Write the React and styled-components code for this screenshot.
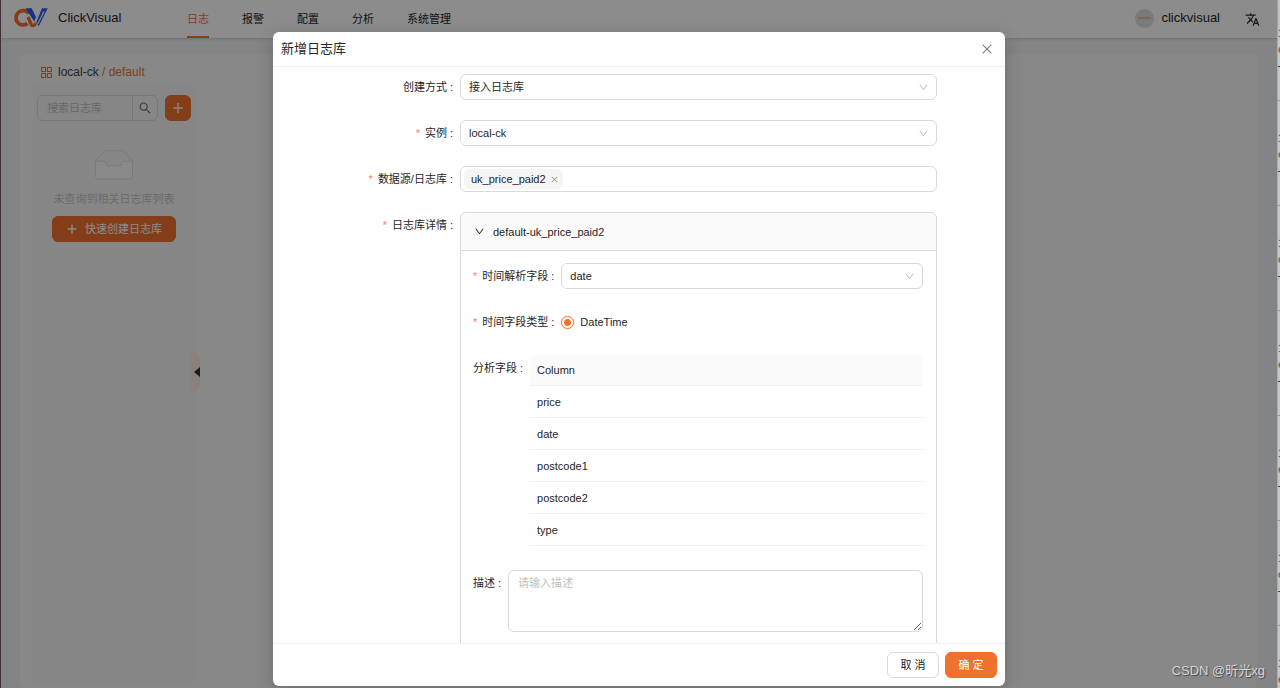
import React from "react";
import styled, { createGlobalStyle, css } from "styled-components";
import {
  AiOutlineAppstore,
  AiOutlineClose,
  AiOutlineDown,
  AiOutlinePlus,
  AiOutlineSearch,
} from "react-icons/ai";
import { MdTranslate } from "react-icons/md";

const sans = `"Liberation Sans", "Noto Sans CJK SC", sans-serif`;
const orange = "#ee722e";
const line = "#d9d9d9";

const GlobalStyle = createGlobalStyle`
  *, *::before, *::after { box-sizing: border-box; }
  body { margin: 0; font: 11px/18px ${sans}; color: #262626; background: #3f3039; }
  button, input, select, textarea { font: inherit; color: inherit; margin: 0; }
  a { color: inherit; text-decoration: none; }
  svg { display: block; flex: none; }
`;

const Desktop = styled.div`
  display: flex;
  height: 100vh;
  padding-left: 1px;
  overflow: hidden;
`;

const AppWindow = styled.div`
  position: relative;
  flex: 1;
  min-width: 0;
  display: flex;
  flex-direction: column;
  background: #eef1f5;
`;

const TopBar = styled.header`
  display: flex;
  align-items: center;
  height: 38px;
  padding: 0 17px 0 13px;
  background: #fff;
  box-shadow: 0 1px 3px rgba(0, 21, 41, 0.16);
  z-index: 1;
`;

const Brand = styled.a`
  display: flex;
  align-items: center;
  gap: 10px;
  width: 173px;
  padding-bottom: 2px;
  font-size: 13px;
`;

const Nav = styled.nav`
  display: flex;
  align-self: stretch;
  gap: 33px;
  flex: 1;
`;

const NavLink = styled.a`
  display: flex;
  align-items: center;
  padding-top: 2px;
  border-bottom: 2px solid ${(p) => (p.$active ? orange : "transparent")};
  color: ${(p) => (p.$active ? orange : "#262626")};
`;

const User = styled.div`
  display: flex;
  align-items: center;
  gap: 7px;
  margin-right: 25px;
  padding-bottom: 2px;
  font-size: 13px;
`;

const Avatar = styled.span`
  display: grid;
  place-items: center;
  width: 19px;
  height: 19px;
  border-radius: 50%;
  background: #dedede;
  &::before {
    content: "";
    width: 13px;
    height: 2px;
    background: #e5b9a5;
  }
`;

const IconButton = styled.button`
  display: grid;
  place-items: center;
  padding: 0;
  border: 0;
  background: none;
  color: ${(p) => p.$color || "#262626"};
`;

const Card = styled.main`
  flex: 1;
  display: flex;
  flex-direction: column;
  margin: 16px 20px 0 19px;
  padding: 8px 13px 6px;
  border-radius: 6px;
  background: #f8f8f8;
`;

const Crumb = styled.div`
  display: flex;
  align-items: center;
  gap: 4px;
  height: 24px;
  padding: 0 0 4px 6px;
  color: ${orange};
  font-size: 12px;
  b {
    font-weight: 400;
    color: #434343;
  }
`;

const Sidebar = styled.aside`
  position: relative;
  flex: 1;
  width: 162px;
  padding: 9px 4px;
  background: #f5f5f5;
`;

const SearchRow = styled.div`
  display: flex;
  gap: 7px;
`;

const SearchBox = styled.div`
  display: flex;
  flex: 1;
  min-width: 0;
  height: 26px;
  border: 1px solid ${line};
  border-radius: 6px;
  input {
    flex: 1;
    width: 0;
    padding: 0 9px;
    border: 0;
    background: none;
    outline: none;
  }
  input::placeholder {
    color: #bfbfbf;
  }
  button {
    width: 25px;
    border-left: 1px solid ${line};
  }
`;

const Button = styled.button`
  display: inline-flex;
  align-items: center;
  justify-content: center;
  gap: 7px;
  height: 26px;
  width: ${(p) => p.$width};
  padding: 0;
  border: 1px solid ${line};
  border-radius: 6px;
  background: #fff;
  white-space: pre;
  ${(p) =>
    p.$primary &&
    css`
      border-color: ${orange};
      background: ${orange};
      color: #fff;
    `}
`;

const Empty = styled.div`
  display: flex;
  flex-direction: column;
  align-items: center;
  padding-top: 29px;
  color: #c4c4c4;
  p {
    margin: 7px 0 8px;
  }
`;

const Handle = styled.button`
  position: absolute;
  top: 266px;
  right: -5px;
  display: grid;
  place-items: center end;
  width: 9px;
  height: 40px;
  padding: 0;
  border: 0;
  border-radius: 0 8px 8px 0;
  background: #fbe9df;
`;

const Mask = styled.div`
  position: absolute;
  inset: 0;
  z-index: 2;
  display: flex;
  justify-content: center;
  padding: 32px 0 2px;
  background: rgba(0, 0, 0, 0.45);
`;

const Modal = styled.section`
  display: flex;
  flex-direction: column;
  width: 732px;
  max-width: 100%;
  border-radius: 6px;
  background: #fff;
  box-shadow: 0 5px 18px rgba(0, 0, 0, 0.2);
`;

const ModalHead = styled.header`
  display: flex;
  align-items: center;
  justify-content: space-between;
  height: 35px;
  padding: 0 11px 1px 8px;
  border-bottom: 1px solid #f0f0f0;
  h2 {
    margin: 0;
    font-size: 13px;
    font-weight: 400;
  }
`;

const ModalBody = styled.form`
  flex: 1;
  min-height: 0;
  overflow: hidden;
  display: flex;
  flex-direction: column;
  gap: 20px;
  padding: 7px 8px;
`;

const ModalFoot = styled.footer`
  display: flex;
  justify-content: flex-end;
  gap: 6px;
  padding: 8px;
  border-top: 1px solid #f0f0f0;
`;

const Field = styled.div`
  display: grid;
  grid-template-columns: 6fr 16fr 2fr;
  flex: none;
`;

const InnerField = styled.div`
  display: flex;
`;

const Label = styled.label`
  display: flex;
  align-items: center;
  justify-content: flex-end;
  height: 26px;
  white-space: nowrap;
  &::before {
    content: ${(p) => (p.$required ? '"*"' : "none")};
    margin-right: 5px;
    color: #ff7875;
  }
  &::after {
    content: ":";
    margin: 0 7px 0 3px;
  }
`;

const SelectBox = styled.div`
  display: flex;
  align-items: center;
  flex: 1;
  select {
    flex: 1;
    width: 0;
    height: 26px;
    padding: 0 28px 0 8px;
    border: 1px solid ${line};
    border-radius: 6px;
    background: #fff;
    appearance: none;
    outline: none;
  }
  svg {
    margin: 0 8px 0 -19px;
    color: #bfbfbf;
    pointer-events: none;
  }
`;

const TagBox = styled.div`
  display: flex;
  align-items: center;
  gap: 4px;
  height: 26px;
  padding: 0 3px;
  border: 1px solid ${line};
  border-radius: 6px;
  input {
    flex: 1;
    min-width: 0;
    border: 0;
    outline: none;
    background: none;
  }
`;

const Tag = styled.span`
  display: flex;
  align-items: center;
  gap: 4px;
  height: 20px;
  padding: 0 4px 0 7px;
  border-radius: 6px;
  background: #f5f5f5;
`;

const Panel = styled.div`
  border: 1px solid ${line};
  border-radius: 6px 6px 0 0;
`;

const PanelHead = styled.button`
  display: flex;
  align-items: center;
  gap: 8px;
  width: 100%;
  height: 38px;
  padding: 0 13px;
  border: 0;
  border-bottom: 1px solid ${line};
  border-radius: 6px 6px 0 0;
  background: #fafafa;
`;

const PanelBody = styled.div`
  display: flex;
  flex-direction: column;
  gap: 20px;
  padding: 12px 13px 26px 12px;
`;

const Radio = styled.label`
  display: flex;
  align-items: center;
  gap: 6px;
  input {
    appearance: none;
    width: 13px;
    height: 13px;
    border: 1px solid ${orange};
    border-radius: 50%;
    background: radial-gradient(circle, ${orange} 3px, #fff 4px);
    box-shadow: 0 0 0 1px #fdeee5;
  }
`;

const Columns = styled.table`
  flex: 1;
  margin-bottom: 4px;
  border-collapse: separate;
  border-spacing: 0;
  text-align: left;
  th,
  td {
    height: 32px;
    padding: 0 7px;
    border-bottom: 1px solid #f0f0f0;
    font-weight: 400;
  }
  th {
    height: 31px;
    background: #fafafa;
    border-radius: 6px 6px 0 0;
  }
`;

const TextArea = styled.textarea`
  flex: 1;
  height: 62px;
  padding: 3px 9px;
  border: 1px solid ${line};
  border-radius: 6px;
  outline: none;
  resize: vertical;
  &::placeholder {
    color: #bfbfbf;
  }
`;

const Strip = styled.aside`
  width: 3px;
  flex: none;
  overflow: hidden;
  background: #c6c6c6;
  border-left: 1px solid #adadad;
`;

const StripItem = styled.div`
  height: 105px;
  padding-top: 25px;
  line-height: 16px;
  color: #555;
  b {
    display: block;
    font-weight: 400;
    color: #2c4a86;
  }
  &::after {
    content: "";
    display: block;
    height: 35px;
    margin-top: 9px;
    border: solid #999;
    border-width: 1px 0;
    border-top-color: #444;
  }
`;

const Watermark = styled.div`
  position: absolute;
  right: 12px;
  bottom: 8px;
  z-index: 3;
  font-size: 13px;
  color: #d6d6d6;
  text-shadow: 1px 1px 1px #444;
`;

const Logo = () => (
  <svg width="34" height="20" viewBox="0 0 34 20" fill="none">
    <path d="M15 5.5A7.2 7.2 0 1 0 13.5 15.5" stroke={orange} strokeWidth="3.8" />
    <path d="M14 9l3.2 7.5q1.2 1.8 3.4.6l1.4-2.2" stroke={orange} strokeWidth="3.2" />
    <path d="M11.7.3h6l4.3 8.7-1.8 4.5z" fill="#2b5be8" />
    <path d="M28 .3h5.7l-9 18-2.4-4z" fill="#2b5be8" />
    <path d="M30 3.5l-6.3 12.5" stroke="#e8edff" strokeWidth="1.4" />
  </svg>
);

const EmptyBox = () => (
  <svg width="52" height="33" viewBox="0 0 64 41">
    <g transform="translate(0 1)">
      <ellipse fill="#f5f5f5" cx="32" cy="33" rx="32" ry="7" />
      <g stroke="#d9d9d9" fill="none">
        <path d="M55 12.76L44.854 1.258C44.367.474 43.656 0 42.907 0H21.093c-.749 0-1.46.474-1.947 1.257L9 12.761V22h46v-9.24z" />
        <path
          d="M41.613 15.931c0-1.605.994-2.93 2.227-2.931H55v18.137C55 33.26 53.68 35 52.05 35h-40.1C10.32 35 9 33.259 9 31.137V13h11.16c1.233 0 2.227 1.323 2.227 2.928v.022c0 1.605 1.005 2.901 2.237 2.901h14.752c1.232 0 2.237-1.308 2.237-2.913v-.007z"
          fill="#fafafa"
        />
      </g>
    </g>
  </svg>
);

const Select = ({ id, value }) => (
  <SelectBox>
    <select id={id} defaultValue={value}>
      <option>{value}</option>
    </select>
    <AiOutlineDown size={11} />
  </SelectBox>
);

const menu = ["日志", "报警", "配置", "分析", "系统管理"];
const columns = ["price", "date", "postcode1", "postcode2", "type"];
const stripItems = [0, 1, 2, 3, 4, 5, 6];

export default function App() {
  return (
    <Desktop>
      <GlobalStyle />
      <AppWindow>
        <TopBar>
          <Brand href="#">
            <Logo />
            ClickVisual
          </Brand>
          <Nav>
            {menu.map((name, i) => (
              <NavLink key={name} href="#" $active={i === 0}>
                {name}
              </NavLink>
            ))}
          </Nav>
          <User>
            <Avatar />
            clickvisual
          </User>
          <IconButton aria-label="Language">
            <MdTranslate size={15} />
          </IconButton>
        </TopBar>

        <Card>
          <Crumb>
            <AiOutlineAppstore size={15} />
            <span>
              <b>local-ck</b> / default
            </span>
          </Crumb>
          <Sidebar>
            <SearchRow>
              <SearchBox>
                <input aria-label="搜索日志库" placeholder="搜索日志库" />
                <IconButton aria-label="搜索" $color="#666">
                  <AiOutlineSearch size={14} />
                </IconButton>
              </SearchBox>
              <Button $primary $width="26px" aria-label="新增">
                <AiOutlinePlus size={14} strokeWidth={20} />
              </Button>
            </SearchRow>
            <Empty>
              <EmptyBox />
              <p>未查询到相关日志库列表</p>
              <Button $primary $width="124px">
                <AiOutlinePlus size={12} strokeWidth={40} />
                快速创建日志库
              </Button>
            </Empty>
            <Handle aria-label="收起">
              <svg width="6" height="10" viewBox="0 0 6 10">
                <path d="M6 0v10L0 5z" fill="#333" />
              </svg>
            </Handle>
          </Sidebar>
        </Card>

        <Mask>
          <Modal role="dialog" aria-labelledby="title">
            <ModalHead>
              <h2 id="title">新增日志库</h2>
              <IconButton aria-label="关闭" $color="#7c7c7c">
                <AiOutlineClose size={14} />
              </IconButton>
            </ModalHead>
            <ModalBody>
              <Field>
                <Label htmlFor="mode">创建方式</Label>
                <Select id="mode" value="接入日志库" />
              </Field>
              <Field>
                <Label htmlFor="instance" $required>实例</Label>
                <Select id="instance" value="local-ck" />
              </Field>
              <Field>
                <Label htmlFor="source" $required>数据源/日志库</Label>
                <TagBox>
                  <Tag>
                    uk_price_paid2
                    <IconButton type="button" aria-label="移除" $color="#8c8c8c">
                      <AiOutlineClose size={9} />
                    </IconButton>
                  </Tag>
                  <input id="source" />
                </TagBox>
              </Field>
              <Field>
                <Label as="span" $required>日志库详情</Label>
                <Panel>
                  <PanelHead type="button">
                    <AiOutlineDown size={11} />
                    default-uk_price_paid2
                  </PanelHead>
                  <PanelBody>
                    <InnerField>
                      <Label htmlFor="timeField" $required>时间解析字段</Label>
                      <Select id="timeField" value="date" />
                    </InnerField>
                    <InnerField>
                      <Label as="span" $required>时间字段类型</Label>
                      <Radio>
                        <input type="radio" name="timeType" defaultChecked />
                        DateTime
                      </Radio>
                    </InnerField>
                    <InnerField>
                      <Label as="span">分析字段</Label>
                      <Columns>
                        <thead>
                          <tr>
                            <th>Column</th>
                          </tr>
                        </thead>
                        <tbody>
                          {columns.map((name) => (
                            <tr key={name}>
                              <td>{name}</td>
                            </tr>
                          ))}
                        </tbody>
                      </Columns>
                    </InnerField>
                    <InnerField>
                      <Label htmlFor="desc">描述</Label>
                      <TextArea id="desc" placeholder="请输入描述" />
                    </InnerField>
                  </PanelBody>
                </Panel>
              </Field>
            </ModalBody>
            <ModalFoot>
              <Button $width="52px">取 消</Button>
              <Button $primary $width="52px">确 定</Button>
            </ModalFoot>
          </Modal>
        </Mask>
        <Watermark>CSDN @昕光xg</Watermark>
      </AppWindow>
      <Strip aria-hidden="true">
        {stripItems.map((n) => (
          <StripItem key={n}>
            <b>1</b>e
          </StripItem>
        ))}
      </Strip>
    </Desktop>
  );
}
